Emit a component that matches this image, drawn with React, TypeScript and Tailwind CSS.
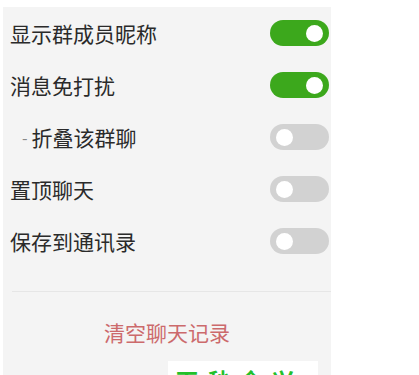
import React from 'react';

const rows = [
  { label: '显示群成员昵称', on: true },
  { label: '消息免打扰', on: true },
  { label: '折叠该群聊', on: false, sub: true },
  { label: '置顶聊天', on: false },
  { label: '保存到通讯录', on: false },
];

function Toggle({ on }: { on: boolean }) {
  return (
    <div
      className={`flex items-center w-[59px] h-[26px] rounded-full px-[6px] ${
        on ? 'bg-[#3ca81c] justify-end' : 'bg-[#d2d2d2] justify-start'
      }`}
    >
      <div className="w-[17px] h-[17px] rounded-full bg-white" />
    </div>
  );
}

export default function App() {
  return (
    <div
      className="relative w-[419px] h-[375px] bg-white pt-[7px] pl-[3px] overflow-hidden"
      style={{ fontFamily: '"Noto Sans CJK SC", "Noto Sans", sans-serif' }}
    >
      <div className="w-[328px] h-full bg-[#f4f4f4]">
        {rows.map((row) => (
          <div key={row.label} className="flex items-center justify-between h-[52px] pl-[7px] pr-[2px]">
            <div className="flex items-center text-[21px] text-[#2a2a2a] leading-none">
              {row.sub && <span className="ml-[12px] mr-[4px] text-[#888888] text-[16px]">-</span>}
              {row.label}
            </div>
            <Toggle on={row.on} />
          </div>
        ))}

        {/* divider */}
        <div className="mt-[24px] ml-[9px] h-px bg-[#e6e6e6]" />

        <div className="flex justify-center pt-[30px] text-[21px] leading-none text-[#cc6a6c]">
          清空聊天记录
        </div>
      </div>

      {/* watermark */}
      <div className="absolute left-[168px] top-[361px] w-[150px] h-[20px] bg-white overflow-hidden">
        <div className="pl-[8px] pt-[7px] text-[22px] font-bold leading-none text-[#22c02a] tracking-[10px]">
          下秒全兴
        </div>
      </div>
    </div>
  );
}
